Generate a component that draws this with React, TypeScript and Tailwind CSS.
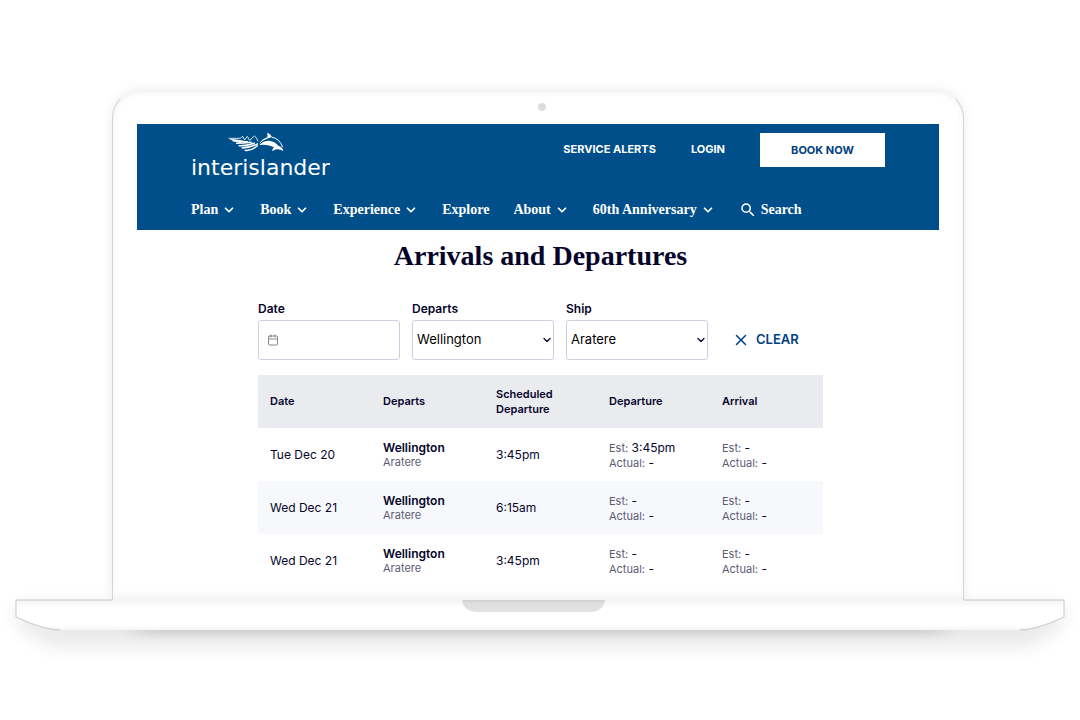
import React, { useState } from 'react';
import { Calendar, ChevronDown, X } from 'lucide-react';
import { MdSearch } from 'react-icons/md';

interface Sailing {
    date: string;
    port: string;
    ship: string;
    scheduled: string;
    estimatedDeparture: string;
}

const NAV_ITEMS: { label: string; hasMenu: boolean }[] = [
    { label: 'Plan', hasMenu: true },
    { label: 'Book', hasMenu: true },
    { label: 'Experience', hasMenu: true },
    { label: 'Explore', hasMenu: false },
    { label: 'About', hasMenu: true },
    { label: '60th Anniversary', hasMenu: true },
];

const SAILINGS: Sailing[] = [
    { date: 'Tue Dec 20', port: 'Wellington', ship: 'Aratere', scheduled: '3:45pm', estimatedDeparture: '3:45pm' },
    { date: 'Wed Dec 21', port: 'Wellington', ship: 'Aratere', scheduled: '6:15am', estimatedDeparture: '-' },
    { date: 'Wed Dec 21', port: 'Wellington', ship: 'Aratere', scheduled: '3:45pm', estimatedDeparture: '-' },
];

const Logo = () => (
    <a href="#" className="flex flex-col items-center text-white">
        <svg viewBox="294 32 168 60" className="w-14 h-5 -ml-2" fill="none" stroke="currentColor">
            <path d="M296 51 L331 51 L338 45 L344 56 L352 45 L359 57 L373 44 Q379 46 384 60" strokeWidth="2.5" />
            <path d="M297 52 Q318 52 345 60 L330 65 Q310 60 297 52Z" fill="currentColor" stroke="none" />
            <path d="M308 58 Q328 59 354 62 M318 66 Q338 66 365 63 M326 73 Q349 75 374 65 M335 80 Q359 80 384 67 M344 87 Q365 90 383 72" strokeWidth="4.5" />
            <path d="M388 68 Q393 54 412 48 Q414 41 411 34 Q423 38 425 47 Q420 49 411 52 Q398 56 388 68Z" fill="currentColor" stroke="none" />
            <path d="M424 47 Q450 52 458 78" strokeWidth="3" />
            <path d="M388 71 Q400 58 418 58 Q436 61 446 74 Q458 78 460 89 Q450 83 440 84 Q432 85 427 90 Q426 82 432 78 Q415 67 388 71Z" fill="currentColor" stroke="none" />
        </svg>
        <span className="mt-1 font-['DejaVu_Sans',sans-serif] text-[22px] leading-6">interislander</span>
    </a>
);

const SiteHeader = () => (
    <header className="bg-[#004f8b] px-[54px] py-2 text-white">
        <div className="flex items-start justify-between">
            <Logo />
            <div className="flex items-center gap-[35px] text-[11px] font-bold">
                <a href="#">SERVICE ALERTS</a>
                <a href="#">LOGIN</a>
                <button className="mt-px w-[125px] h-[34px] bg-white text-[#004182]">BOOK NOW</button>
            </div>
        </div>
        <nav className="mt-[18px] flex items-center gap-6 font-['Liberation_Serif',serif] text-[14px] leading-6 font-bold whitespace-nowrap">
            {NAV_ITEMS.map((item) => (
                <a key={item.label} href="#" className="flex items-center gap-1">
                    {item.label}
                    {item.hasMenu && <ChevronDown className="w-3.5 h-3.5" strokeWidth={3} />}
                </a>
            ))}
            <a href="#" className="flex items-center gap-1">
                <MdSearch className="w-[18px] h-[18px]" />
                Search
            </a>
        </nav>
    </header>
);

interface SelectFieldProps {
    id: string;
    label: string;
    value: string;
    options: string[];
    onChange: (value: string) => void;
}

const SelectField: React.FC<SelectFieldProps> = ({ id, label, value, options, onChange }) => (
    <div className="w-[142px]">
        <label htmlFor={id} className="mb-px block text-[12px] leading-5 font-semibold">{label}</label>
        <div className="relative">
            <select
                id={id}
                value={value}
                onChange={(e) => onChange(e.target.value)}
                className="w-full h-10 appearance-none rounded-[3px] border border-[#cfcfe4] bg-white pl-1 text-[13px] text-black"
            >
                {options.map((option) => (
                    <option key={option} value={option}>{option}</option>
                ))}
            </select>
            <ChevronDown className="pointer-events-none absolute right-px top-3.5 w-3 h-3" strokeWidth={2.5} />
        </div>
    </div>
);

const Times = ({ estimated }: { estimated: string }) => (
    <>
        <div><span className="text-[11px] leading-none text-[#5b5b74]">Est:</span> {estimated}</div>
        <div><span className="text-[11px] leading-none text-[#5b5b74]">Actual:</span> -</div>
    </>
);

const SailingsTable = () => (
    <table className="w-full table-fixed text-left text-[12px] leading-[15px]">
        <thead className="bg-[#eaebef] text-[11px]">
            <tr className="h-[53px]">
                {['Date', 'Departs', 'Scheduled Departure', 'Departure', 'Arrival'].map((heading) => (
                    <th key={heading} scope="col" className="px-3 font-semibold">{heading}</th>
                ))}
            </tr>
        </thead>
        <tbody>
            {SAILINGS.map((sailing, i) => (
                <tr key={i} className="h-[53px] even:bg-[#f7f8fb]">
                    <td className="px-3">{sailing.date}</td>
                    <td className="px-3">
                        <div className="font-semibold">{sailing.port}</div>
                        <div className="text-[11px] text-[#5b5b74]">{sailing.ship}</div>
                    </td>
                    <td className="px-3">{sailing.scheduled}</td>
                    <td className="px-3"><Times estimated={sailing.estimatedDeparture} /></td>
                    <td className="px-3"><Times estimated="-" /></td>
                </tr>
            ))}
        </tbody>
    </table>
);

const LaptopBase = () => (
    <svg viewBox="0 0 1048 90" className="block w-full overflow-visible">
        <defs>
            <linearGradient id="notch" x1="0" y1="0" x2="0" y2="1">
                <stop offset="0" stopColor="#cfcfcf" />
                <stop offset="0.3" stopColor="#dedede" />
                <stop offset="1" stopColor="#e3e3e3" />
            </linearGradient>
            <linearGradient id="deck" x1="0" y1="0" x2="0" y2="1">
                <stop offset="0" stopColor="#f3f3f3" />
                <stop offset="0.25" stopColor="#ffffff" />
                <stop offset="0.85" stopColor="#ffffff" />
                <stop offset="1" stopColor="#f5f5f5" />
            </linearGradient>
            <filter id="soft" x="-10%" y="-100%" width="120%" height="300%">
                <feGaussianBlur stdDeviation="9" />
            </filter>
            <filter id="tight" x="-10%" y="-200%" width="120%" height="500%">
                <feGaussianBlur stdDeviation="14 4" />
            </filter>
            <clipPath id="below">
                <path d="M-16 -16 H96 V0 H948 V-16 H1064 V90 H-16Z" />
            </clipPath>
        </defs>
        <g clipPath="url(#below)">
            <path d="M0 4 H1048 V22 Q1025 48 1000 48 H48 Q23 48 0 22Z" fill="#000" opacity="0.08" filter="url(#soft)" />
            <path d="M120 18 H928 V35 H120Z" fill="#000" opacity="0.12" filter="url(#tight)" />
        </g>
        <path d="M0 0 H1048 V17 Q1020 30 1004 30 H44 Q28 30 0 17Z" fill="url(#deck)" />
        <path d="M44 30 Q28 30 0 17 V0 H96 M948 0 H1048 V17 Q1020 30 1004 30" fill="none" stroke="#c8c8c8" />
        <path d="M446 0 H589 Q587 12 574 12 H461 Q448 12 446 0Z" fill="url(#notch)" />
    </svg>
);

export default function App() {
    const [date, setDate] = useState('');
    const [port, setPort] = useState('Wellington');
    const [ship, setShip] = useState('Aratere');

    const handleClear = () => {
        setDate('');
        setPort('Wellington');
        setShip('Aratere');
    };

    return (
        <div className="mx-auto max-w-[1080px] bg-white px-4 pt-[90px] font-['Inter',sans-serif] text-[#05052b]">
            <div className="ml-24 mr-[100px] rounded-t-[28px] border border-b-0 border-[#d4d4d4] border-t-[#f4f4f4] bg-white px-6 pt-3 shadow-[0_0_12px_rgba(0,0,0,0.08),inset_0_1px_6px_rgba(0,0,0,0.06)]">
                <div className="ml-[50%] mb-[13px] w-2 h-2 rounded-full bg-[#dddddd]" />
                <SiteHeader />

                <main className="pl-[121px] pr-[116px] pb-[3px]">
                    <h1 className="pt-2 text-center font-['Liberation_Serif',serif] text-[28px] leading-9 font-bold">Arrivals and Departures</h1>

                    <form className="mt-[25px] flex items-end gap-3" onSubmit={(e) => e.preventDefault()}>
                        <div className="w-[142px]">
                            <label htmlFor="date" className="mb-px block text-[12px] leading-5 font-semibold">Date</label>
                            <div className="flex h-10 items-center gap-2 rounded-[3px] border border-[#cfcfe4] px-2">
                                <Calendar className="w-3 h-3 shrink-0 text-[#888888]" />
                                <input
                                    id="date"
                                    type="text"
                                    value={date}
                                    onChange={(e) => setDate(e.target.value)}
                                    className="w-full min-w-0 text-[13px] outline-none"
                                />
                            </div>
                        </div>
                        <SelectField id="departs" label="Departs" value={port} options={['Wellington', 'Picton']} onChange={setPort} />
                        <SelectField id="ship" label="Ship" value={ship} options={['Aratere', 'Kaitaki', 'Kaiarahi']} onChange={setShip} />
                        <button type="button" onClick={handleClear} className="ml-3 flex h-10 items-center gap-1.5 text-[13px] font-semibold text-[#004182]">
                            <X className="w-[18px] h-[18px]" />
                            CLEAR
                        </button>
                    </form>

                    <div className="mt-[15px]">
                        <SailingsTable />
                    </div>
                </main>
                <div className="-mx-6 h-2.5 bg-linear-to-b from-white to-[#f3f3f3]" />
            </div>
            <LaptopBase />
        </div>
    );
}
